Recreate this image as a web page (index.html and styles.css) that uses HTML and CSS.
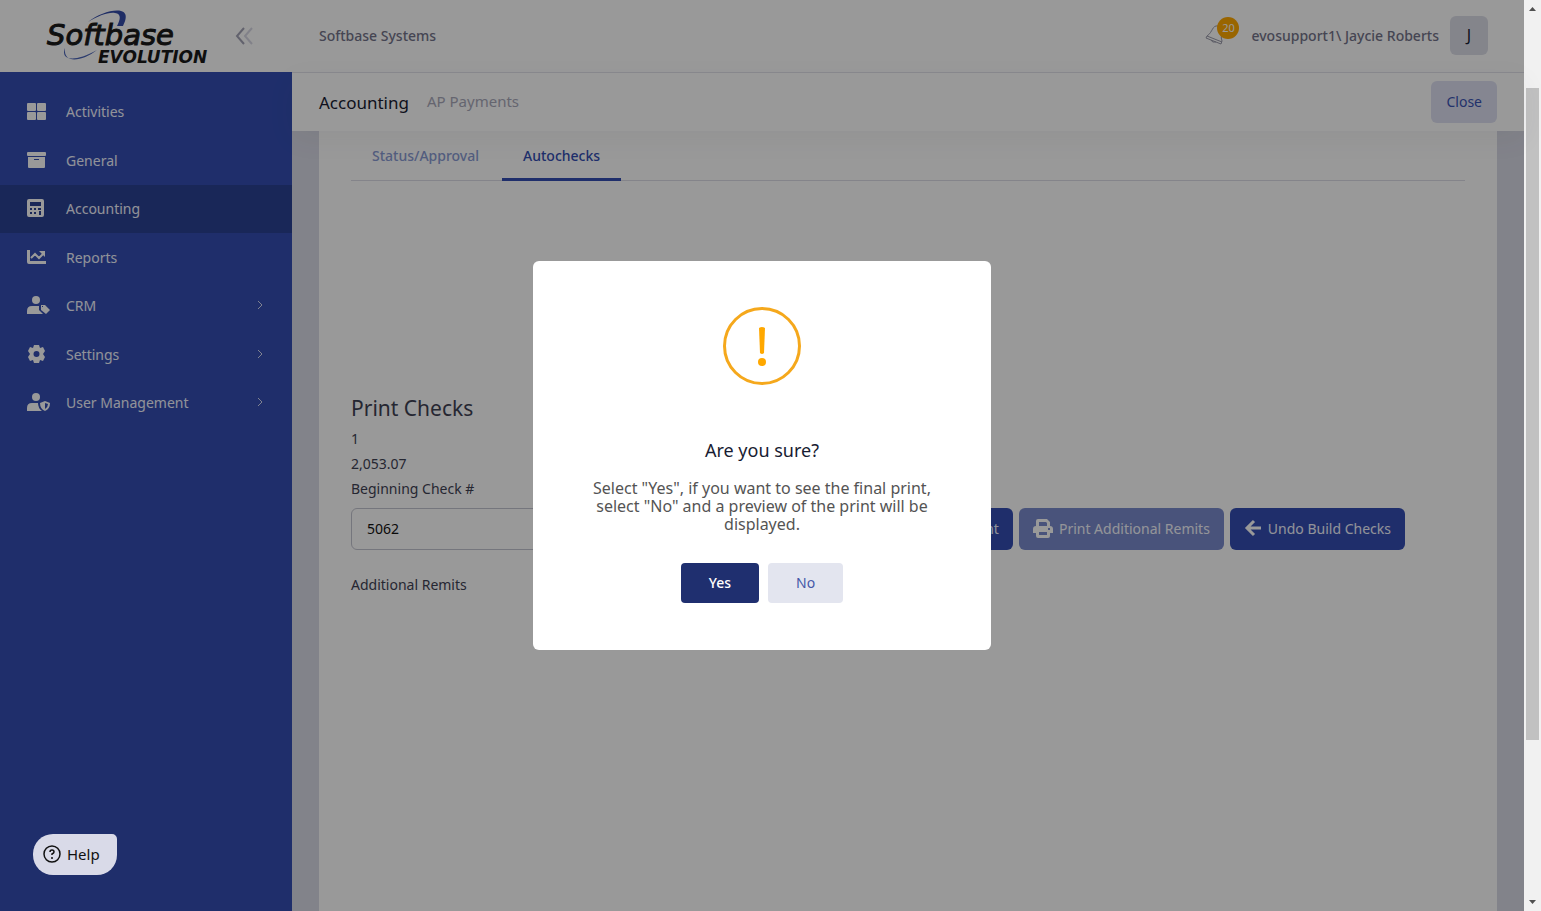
FILE: index.html
```html
<!DOCTYPE html>
<html lang="en">
<head>
    <meta charset="UTF-8">
    <meta name="viewport" content="width=device-width, initial-scale=1.0">
    <title>Softbase Evolution - AP Payments</title>
    <link rel="stylesheet" href="styles.css">
</head>
<body>
    <div class="page">
        <aside class="sidebar">
            <div class="brand">
                <svg class="logo" width="164" height="58" viewBox="0 0 164 58" role="img" aria-label="Softbase Evolution">
                    <path d="M43 15C53 7 68 2 76 4C84 6 80 15 78 19L72 19C75 13 77 7 70 6C63 5 53 9 43 15Z" fill="#344ca8"/>
                    <path d="M20 41C15 53 29 56 52 43C38 54 18 58 20 41Z" fill="#4a64b8"/>
                    <text class="logo-top" x="2" y="38">Softbase</text>
                    <text class="logo-bottom" x="53" y="56">EVOLUTION</text>
                </svg>
                <button class="collapse" aria-label="Collapse menu">
                    <svg width="18" height="18" viewBox="0 0 18 18" fill="none" stroke-width="2">
                        <path d="M9 1L2 9L9 17" stroke="#a3a3b6"/>
                        <path d="M17 1L10 9L17 17" stroke="#d8d8e4"/>
                    </svg>
                </button>
            </div>
            <nav>
                <ul class="menu">
                    <li><a href="#">
                        <svg class="icon" viewBox="0 0 24 20"><rect x="0" y="2" width="9" height="8" rx="1"/><rect x="10" y="2" width="9" height="8" rx="1"/><rect x="0" y="11" width="9" height="8" rx="1"/><rect x="10" y="11" width="9" height="8" rx="1"/></svg>
                        <span>Activities</span></a></li>
                    <li><a href="#">
                        <svg class="icon" viewBox="0 0 24 20"><rect x="0" y="2" width="19" height="4" rx="1"/><path d="M1 7H18V17Q18 18 17 18H2Q1 18 1 17ZM7 9V10H12V9Z" fill-rule="evenodd"/></svg>
                        <span>General</span></a></li>
                    <li class="active"><a href="#">
                        <svg class="icon" viewBox="0 0 24 20"><path d="M2 1H15Q17 1 17 3V17Q17 19 15 19H2Q0 19 0 17V3Q0 1 2 1ZM3 4V8H14V4ZM3 10V12H5V10ZM7 10V12H9V10ZM11 10V12H14V10ZM3 14V16H5V14ZM7 14V16H9V14ZM12 13V17H14V13Z" fill-rule="evenodd"/></svg>
                        <span>Accounting</span></a></li>
                    <li><a href="#">
                        <svg class="icon" viewBox="0 0 24 20"><path d="M0 3H3V14H19V17H2Q0 17 0 15Z"/><path d="M4 11L8 7L12 11L16 7" fill="none" stroke="#fff" stroke-width="2"/><path d="M12 4H18V10Z"/></svg>
                        <span>Reports</span></a></li>
                    <li><a href="#">
                        <svg class="icon" viewBox="0 0 24 20"><circle cx="9" cy="5" r="4"/><path d="M0 19V16Q0 11 5 11H12V15L16 19Z"/><path d="M14 10H18L23 15L19 19L14 15ZM15 11V12H16V11Z" fill-rule="evenodd"/></svg>
                        <span>CRM</span>
                        <svg class="arrow" viewBox="0 0 8 10"><path d="M2 1L6 5L2 9"/></svg></a></li>
                    <li><a href="#">
                        <svg class="icon" viewBox="0 0 24 20"><path d="M7 1H12L13 4L16 3L18 7L16 10L18 13L16 17L13 16L12 19H7L6 16L3 17L1 13L3 10L1 7L3 3L6 4ZM9.500 7A3 3 0 1 0 9.500 13A3 3 0 1 0 9.500 7Z" fill-rule="evenodd"/></svg>
                        <span>Settings</span>
                        <svg class="arrow" viewBox="0 0 8 10"><path d="M2 1L6 5L2 9"/></svg></a></li>
                    <li><a href="#">
                        <svg class="icon" viewBox="0 0 24 20"><circle cx="9" cy="5" r="4"/><path d="M0 19V16Q0 11 5 11H11Q11 16 15 19Z"/><path d="M13 11L18 9L23 11Q23 17 18 19Q13 17 13 11ZM18 11V17Q21 15 21 12Z" fill-rule="evenodd"/></svg>
                        <span>User Management</span>
                        <svg class="arrow" viewBox="0 0 8 10"><path d="M2 1L6 5L2 9"/></svg></a></li>
                </ul>
            </nav>
        </aside>

        <div class="main">
            <header class="topbar">
                <span class="company">Softbase Systems</span>
                <div class="user">
                    <div class="bell">
                        <svg width="22" height="22" viewBox="0 0 22 22" fill="none" stroke="#9a9aaa"><path d="M13 2C7 1 8 8 2 12L1 14L16 20L17 17C15 13 18 9 16 5M2 12L17 18M6 16Q7 19 11 18"/></svg>
                        <span class="badge">20</span>
                    </div>
                    <span class="username">evosupport1\ Jaycie Roberts</span>
                    <span class="avatar">J</span>
                </div>
            </header>
            <div class="subheader">
                <h1>Accounting</h1>
                <span class="crumb">AP Payments</span>
                <button class="close-button">Close</button>
            </div>
            <main class="content">
                <section class="card">
                    <div class="tabs">
                        <a href="#">Status/Approval</a>
                        <a href="#" class="selected">Autochecks</a>
                    </div>
                    <h2>Print Checks</h2>
                    <p>1</p>
                    <p>2,053.07</p>
                    <label for="checkNumber">Beginning Check #</label>
                    <div class="actions">
                        <input type="text" id="checkNumber" value="5062">
                        <button class="btn print">Print</button>
                        <button class="btn" disabled>
                            <svg width="20" height="20" viewBox="0 0 20 20"><path d="M3 8V3Q3 1 5 1H14L17 4V8H14V5L13 4H6V8ZM3 8H17Q20 8 20 11V15H17V18Q17 20 15 20H5Q3 20 3 18V15H0V11Q0 8 3 8ZM6 14V17H14V14ZM15 10V12H17V10Z" fill="#fff" fill-rule="evenodd"/></svg>
                            Print Additional Remits
                        </button>
                        <button class="btn">
                            <svg width="18" height="18" viewBox="0 0 18 18" fill="none" stroke="#fff" stroke-width="3"><path d="M10 2L3 9L10 16M3 9H17"/></svg>
                            Undo Build Checks
                        </button>
                    </div>
                    <p>Additional Remits</p>
                </section>
            </main>
        </div>

        <div class="scrollbar" aria-hidden="true">
            <svg width="17" height="17" viewBox="0 0 17 17"><path d="M5 11L8.500 7L12 11Z"/></svg>
            <div class="track">
                <div class="thumb"></div>
            </div>
            <svg width="17" height="17" viewBox="0 0 17 17"><path d="M5 6L8.500 10L12 6Z"/></svg>
        </div>
    </div>

    <div class="overlay">
        <div class="dialog" role="dialog" aria-labelledby="dialogTitle">
            <svg class="warning" width="78" height="78" viewBox="0 0 78 78">
                <circle cx="39" cy="39" r="37.500" fill="none" stroke="#f5a81c" stroke-width="3"/>
                <path d="M36 21Q39 19 42 21L41 46Q39 48 37 46Z" fill="#ffa800"/>
                <circle cx="39" cy="55" r="4" fill="#ffa800"/>
            </svg>
            <h2 id="dialogTitle">Are you sure?</h2>
            <p>Select "Yes", if you want to see the final print, select "No" and a preview of the print will be displayed.</p>
            <div class="dialog-buttons">
                <button class="yes">Yes</button>
                <button class="no">No</button>
            </div>
        </div>
    </div>

    <button class="help">
        <svg width="18" height="18" viewBox="0 0 18 18" fill="none" stroke="#111" stroke-width="1.500"><circle cx="9" cy="9" r="8"/><path d="M7 7Q7 5 9 5Q11 5 11 7Q11 8 9 9V10M9 12V14"/></svg>
        Help
    </button>
</body>
</html>
```
FILE: styles.css
```css
* {
    box-sizing: border-box;
}

body {
    margin: 0;
    font-family: "Noto Sans", "Open Sans", sans-serif;
    font-size: 14px;
    color: #3f4254;
    overflow: hidden;
}

h1, h2, p {
    margin: 0;
    font-weight: 400;
}

a {
    text-decoration: none;
}

button, input {
    font: inherit;
}

button {
    border: none;
    cursor: pointer;
}

.page {
    display: flex;
    height: 100vh;
}

/* Sidebar */
.sidebar {
    width: 292px;
    flex-shrink: 0;
    background: #344eb3;
}

.brand {
    display: flex;
    align-items: center;
    justify-content: space-between;
    height: 72px;
    padding: 0 39px 0 45px;
    background: #fff;
}

.logo {
    overflow: visible;
}

.logo text {
    font-family: "DejaVu Sans", sans-serif;
    font-style: italic;
    fill: #191919;
}

.logo-top {
    font-size: 29px;
    stroke: #191919;
}

.logo-bottom {
    font-size: 17px;
    font-weight: 700;
}

.collapse {
    display: flex;
    padding: 0;
    background: none;
}

.menu {
    list-style: none;
    margin: 0;
    padding: 16px 0;
}

.menu li:nth-child(odd) {
    margin-bottom: 1px;
}

.menu a {
    display: flex;
    align-items: center;
    height: 48px;
    padding: 0 28px 2px 27px;
    color: #fff;
}

.menu .active {
    background: #2b4193;
}

.icon {
    width: 24px;
    height: 20px;
    margin-right: 15px;
    fill: #fff;
}

.menu span {
    flex: 1;
    color: #f2f4ff;
}

.arrow {
    width: 8px;
    height: 10px;
    fill: none;
    stroke: #d5daf2;
}

/* Header */
.main {
    flex: 1;
    display: flex;
    flex-direction: column;
    min-width: 0;
    background: #d9dae6;
}

.topbar {
    display: flex;
    align-items: center;
    justify-content: space-between;
    height: 73px;
    padding: 0 36px 2px 27px;
    background: #fff;
    border-bottom: 1px solid #e4e4ec;
}

.company, .username {
    font-weight: 500;
    color: #74748a;
}

.user {
    display: flex;
    align-items: center;
}

.bell {
    position: relative;
    padding: 4px 24px 0 0;
}

.badge {
    position: absolute;
    top: -3px;
    left: 12px;
    width: 22px;
    height: 22px;
    border-radius: 50%;
    background: #ffa800;
    color: #fff;
    font-size: 11px;
    line-height: 22px;
    text-align: center;
}

.avatar {
    width: 38px;
    height: 39px;
    margin-left: 11px;
    border-radius: 6px;
    background: #dddee8;
    color: #181c32;
    font-size: 16px;
    line-height: 39px;
    text-align: center;
}

.subheader {
    display: flex;
    align-items: center;
    height: 58px;
    flex-shrink: 0;
    padding: 0 27px;
    background: #fff;
    box-shadow: 0 8px 28px rgba(60, 60, 80, 0.06);
    z-index: 1;
}

.subheader h1 {
    font-size: 17px;
    color: #181c32;
}

.crumb {
    margin-left: 18px;
    padding-bottom: 2px;
    font-size: 15px;
    color: #a9a9ba;
}

.close-button {
    height: 42px;
    margin-left: auto;
    padding: 0 15px 2px;
    border-radius: 6px;
    background: #dee0f2;
    color: #3a54b4;
}

/* Content */
.content {
    flex: 1;
    display: flex;
    padding: 0 27px;
}

.card {
    flex: 1;
    padding: 0 32px;
    background: #fff;
    line-height: 25px;
}

.tabs {
    display: flex;
    gap: 2px;
    height: 50px;
    margin-bottom: 212px;
    border-bottom: 1px solid #dcdde6;
}

.tabs a {
    height: 50px;
    padding: 12px 21px 0;
    font-weight: 500;
    color: #8a9bd4;
}

.tabs .selected {
    border-bottom: 3px solid #344eb3;
    color: #344eb3;
}

.card h2 {
    margin-bottom: 3px;
    font-size: 21px;
    line-height: 30px;
}

.card label {
    display: block;
}

.actions {
    display: flex;
    gap: 6px;
    margin: 7px 0 22px;
    padding-right: 60px;
}

.actions input {
    width: 30%;
    height: 42px;
    padding: 0 15px 2px;
    border: 1px solid #c4c5d0;
    border-radius: 6px;
    color: #111;
}

.btn {
    display: flex;
    align-items: center;
    gap: 6px;
    height: 42px;
    padding: 0 14px 2px;
    border-radius: 6px;
    background: #344eb3;
    color: #f2f4ff;
}

.btn:disabled {
    opacity: 0.65;
}

.print {
    margin-left: auto;
}

/* Scrollbar */
.scrollbar {
    display: flex;
    flex-direction: column;
    width: 17px;
    background: #f1f1f1;
    fill: #505050;
}

.track {
    flex: 1;
    display: flex;
    flex-direction: column;
    padding: 0 2px;
}

.track::before {
    content: "";
    flex: 71;
}

.track::after {
    content: "";
    flex: 154;
}

.thumb {
    flex: 652;
    background: #c1c1c1;
}

/* Confirm dialog */
.overlay {
    position: fixed;
    top: 0;
    right: 17px;
    bottom: 0;
    left: 0;
    z-index: 10;
    display: flex;
    align-items: center;
    justify-content: center;
    background: rgba(0, 0, 0, 0.4);
}

.dialog {
    display: flex;
    flex-direction: column;
    align-items: center;
    width: 458px;
    padding: 46px 52px 47px;
    border-radius: 6px;
    background: #fff;
    text-align: center;
}

.dialog h2 {
    margin: 52px 0 16px;
    font-size: 18px;
    line-height: 26px;
    color: #181c32;
}

.dialog p {
    font-size: 16px;
    line-height: 18px;
    color: #545454;
}

.dialog-buttons {
    display: flex;
    gap: 9px;
    margin-top: 30px;
}

.dialog-buttons button {
    height: 40px;
    padding: 0 28px 2px;
    border-radius: 4px;
}

.yes {
    background: #1f2f6f;
    color: #fff;
    font-weight: 500;
}

.no {
    background: #e3e5ef;
    color: #4658a8;
}

/* Help bubble */
.help {
    position: fixed;
    left: 33px;
    bottom: 36px;
    z-index: 20;
    display: flex;
    align-items: center;
    gap: 6px;
    height: 41px;
    padding: 0 17px 2px 10px;
    border-radius: 20px 5px 20px 20px;
    background: #d9dae8;
    color: #111;
    font-size: 15px;
}
```
